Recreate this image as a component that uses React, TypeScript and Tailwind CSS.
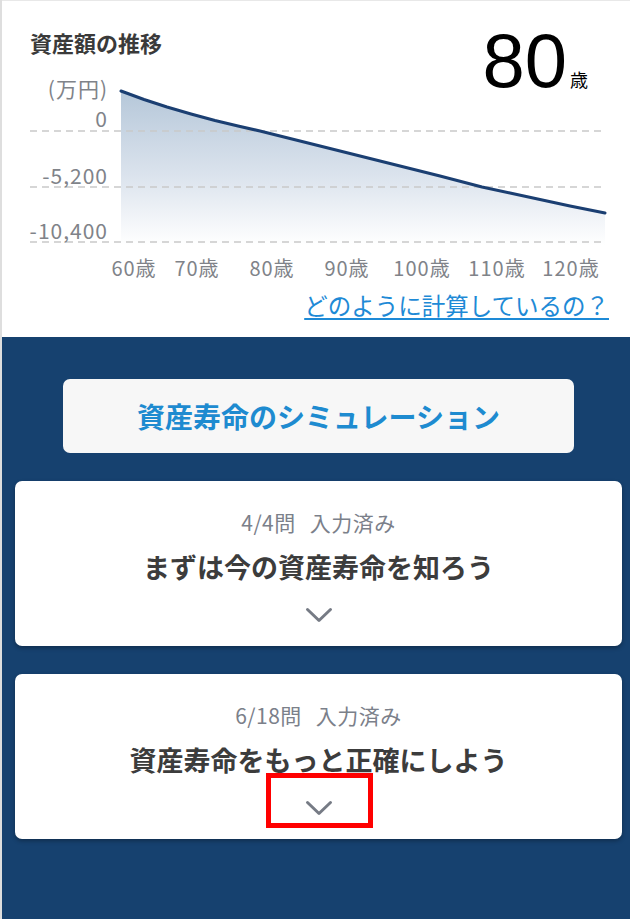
const jp = "font-['Noto_Sans_CJK_JP','Noto_Sans',sans-serif]";

const yLabels = [
  { text: "(万円)", top: "top-[20px]" },
  { text: "0", top: "top-[50px]" },
  { text: "-5,200", top: "top-[107px]" },
  { text: "-10,400", top: "top-[162px]" },
];

const xLabels = [
  { text: "60歳", left: "left-[100px]" },
  { text: "70歳", left: "left-[163px]" },
  { text: "80歳", left: "left-[238px]" },
  { text: "90歳", left: "left-[313px]" },
  { text: "100歳", left: "left-[388px]" },
  { text: "110歳", left: "left-[463px]" },
  { text: "120歳", left: "left-[537px]" },
];

const curve =
  "121,91 144,99.5 167,107 191,114 215,120.5 238,126 260,131 290,138.5 320,146 350,153.5 380,161 410,168.5 440,176 482,187 510,193 540,199.5 570,206 605,213";

function Chart() {
  return (
    <div className="relative h-[220px]">
      <svg
        className="absolute inset-0"
        width={628}
        height={220}
        viewBox="2 56 628 220"
      >
        <defs>
          <linearGradient id="area" x1="0" y1="90" x2="0" y2="245" gradientUnits="userSpaceOnUse">
            <stop offset="0" stopColor="#b5c7d9" />
            <stop offset="0.55" stopColor="#dbe3ed" />
            <stop offset="1" stopColor="#ffffff" />
          </linearGradient>
        </defs>
        <polygon points={`${curve} 605,245 121,245`} fill="url(#area)" />
        {[131, 187, 242].map((y) => (
          <line key={y} x1={30} x2={605} y1={y} y2={y} stroke="#c9c9c9" strokeWidth={1.5} strokeDasharray="7 5" />
        ))}
        <polyline
          points={curve}
          fill="none"
          stroke="#1b3f72"
          strokeWidth={3}
          strokeLinejoin="round"
          strokeLinecap="round"
        />
      </svg>
      {yLabels.map((l) => (
        <span
          key={l.text}
          className={`absolute left-0 w-[106px] text-right text-[21px] leading-[24px] tracking-[1px] text-[#808389] ${l.top}`}
        >
          {l.text}
        </span>
      ))}
      {xLabels.map((l) => (
        <span
          key={l.text}
          className={`absolute top-[200px] w-[64px] text-center text-[20px] leading-[24px] tracking-[1px] text-[#808389] ${l.left}`}
        >
          {l.text}
        </span>
      ))}
    </div>
  );
}

function Chevron() {
  return (
    <svg width={28} height={16} viewBox="0 0 28 16" className="mt-[22px]">
      <path d="M2.5 2.5 L14 13.5 L25.5 2.5" fill="none" stroke="#767b85" strokeWidth={3} strokeLinecap="round" strokeLinejoin="round" />
    </svg>
  );
}

function StepCard({ done, total, title, marked }: { done: number; total: number; title: string; marked?: boolean }) {
  return (
    <div className="relative mt-[28px] ml-[13px] flex h-[165px] w-[607px] flex-col items-center rounded-[7px] bg-white shadow-[0_2px_4px_rgba(0,0,0,0.3)]">
      <p className="pt-[28px] text-[21px] leading-[26px] tracking-[0.5px] text-[#7b808a]">
        {done}/{total}問<span className="ml-[14px]">入力済み</span>
      </p>
      <h3 className="mt-[14px] text-[27px] font-bold leading-[36px] text-[#3c3c3c]">{title}</h3>
      <Chevron />
      {marked ? (
        <div className="absolute left-[251px] top-[99px] h-[55px] w-[107px] border-[5px] border-[#ff0000]" />
      ) : null}
    </div>
  );
}

export default function App() {
  return (
    <div className={`min-h-[919px] w-[630px] border-l-2 border-[#dedede] bg-[#16416f] ${jp}`}>
      <section className="relative h-[337px] border-t border-[#e8e8e8] bg-white">
        <h2 className="pl-[28px] pt-[27px] text-[22px] font-bold leading-[28px] text-[#3a3a3a]">資産額の推移</h2>
        <div className="absolute right-[42px] top-[22px] flex items-baseline text-black">
          <span className="font-['Liberation_Sans',Arial,sans-serif] text-[76px] leading-none">80</span>
          <span className="ml-[3px] text-[18px] leading-none">歳</span>
        </div>
        <Chart />
        <div className="mt-[14px] flex justify-end pr-[21px]">
          <a href="#" className="text-[23.5px] leading-[30px] text-[#1e8ad6] underline underline-offset-[3px]">
            どのように計算しているの？
          </a>
        </div>
      </section>
      <div className="flex flex-col pb-[80px] pt-[42px]">
        <button className="ml-[61px] flex h-[74px] w-[511px] items-center justify-center rounded-[7px] bg-[#f7f7f7] text-[28px] font-bold text-[#1e8bd0]">
          資産寿命のシミュレーション
        </button>
        <StepCard done={4} total={4} title="まずは今の資産寿命を知ろう" />
        <StepCard done={6} total={18} title="資産寿命をもっと正確にしよう" marked />
      </div>
    </div>
  );
}
